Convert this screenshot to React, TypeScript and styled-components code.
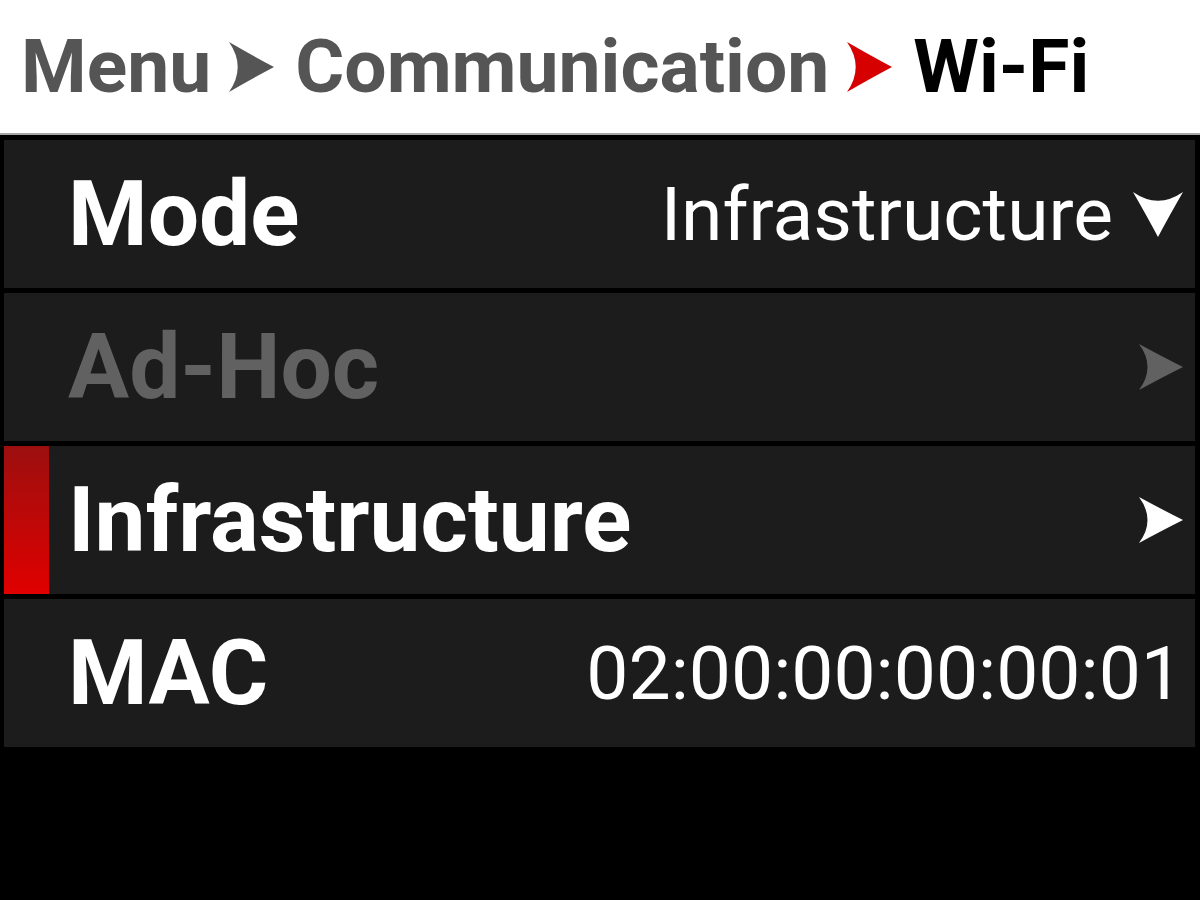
import React from "react";
import styled, { createGlobalStyle } from "styled-components";

const GlobalStyle = createGlobalStyle`
  html, body {
    margin: 0;
    padding: 0;
    background: #000;
  }
  body {
    font-family: Roboto, "Noto Sans", "Liberation Sans", sans-serif;
  }
`;

const Screen = styled.div`
  width: 1200px;
  height: 900px;
  background: #000;
  overflow: hidden;
  display: flex;
  flex-direction: column;
`;

const Header = styled.header`
  height: 133px;
  flex: 0 0 auto;
  background: #fff;
  border-bottom: 2px solid #a6a6a6;
  display: flex;
  align-items: center;
  padding-left: 21px;
`;

const Crumb = styled.span<{ $current?: boolean }>`
  font-size: 75px;
  font-weight: 700;
  line-height: 1;
  color: ${(p) => (p.$current ? "#000" : "#555")};
  white-space: nowrap;
`;

const CrumbSep = styled.svg`
  width: 45px;
  height: 50px;
  margin: 0 21px 0 18px;
  flex: 0 0 auto;
`;

const List = styled.div`
  display: flex;
  flex-direction: column;
  gap: 5px;
  padding: 5px 5px 0 4px;
`;

const Row = styled.div`
  position: relative;
  height: 148px;
  background: #1c1c1c;
  display: flex;
  align-items: center;
  justify-content: space-between;
  padding: 0 12px 0 64px;
`;

const Indicator = styled.div`
  position: absolute;
  left: 0;
  top: 0;
  bottom: 0;
  width: 45px;
  background: linear-gradient(to bottom, #9c0f0f, #e00000);
`;

const Label = styled.span<{ $disabled?: boolean }>`
  font-size: 91px;
  font-weight: 700;
  line-height: 1;
  color: ${(p) => (p.$disabled ? "#616161" : "#fff")};
  white-space: nowrap;
`;

const Value = styled.span<{ $gap?: number }>`
  display: flex;
  align-items: center;
  gap: ${(p) => p.$gap ?? 20}px;
  font-size: 75px;
  font-weight: 400;
  line-height: 1;
  color: #fff;
  white-space: nowrap;
`;

const ArrowSvg = styled.svg`
  width: 44px;
  height: 46px;
  flex: 0 0 auto;
`;

const DownSvg = styled.svg`
  width: 50px;
  height: 45px;
  flex: 0 0 auto;
`;

const RIGHT = "M0 0 Q24 13 44 23 Q24 33 0 46 Q17 23 0 0 Z";
const DOWN = "M46 0 Q33 24 23 44 Q13 24 0 0 Q23 17 46 0 Z";

const Sep = ({ color }: { color: string }) => (
  <CrumbSep viewBox="0 0 44 46" preserveAspectRatio="none">
    <path d={RIGHT} fill={color} />
  </CrumbSep>
);

const RightArrow = ({ color }: { color: string }) => (
  <ArrowSvg viewBox="0 0 44 46" preserveAspectRatio="none">
    <path d={RIGHT} fill={color} />
  </ArrowSvg>
);

const DownArrow = () => (
  <DownSvg viewBox="0 0 46 44" preserveAspectRatio="none">
    <path d={DOWN} fill="#fff" />
  </DownSvg>
);

export default function App() {
  return (
    <>
      <GlobalStyle />
      <Screen>
        <Header>
          <Crumb>Menu</Crumb>
          <Sep color="#555" />
          <Crumb>Communication</Crumb>
          <Sep color="#d60000" />
          <Crumb $current>Wi-Fi</Crumb>
        </Header>
        <List>
          <Row>
            <Label>Mode</Label>
            <Value>
              Infrastructure
              <DownArrow />
            </Value>
          </Row>
          <Row>
            <Label $disabled>Ad-Hoc</Label>
            <RightArrow color="#616161" />
          </Row>
          <Row>
            <Indicator />
            <Label>Infrastructure</Label>
            <RightArrow color="#fff" />
          </Row>
          <Row>
            <Label>MAC</Label>
            <Value>02:00:00:00:00:01</Value>
          </Row>
        </List>
      </Screen>
    </>
  );
}
